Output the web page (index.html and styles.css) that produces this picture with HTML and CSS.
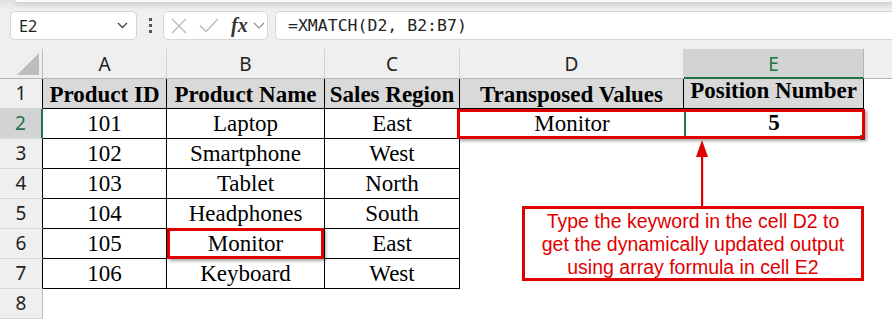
FILE: index.html
```html
<!DOCTYPE html>
<html lang="en">
<head>
    <meta charset="UTF-8">
    <title>XMATCH with Transposed Values</title>
    <link rel="stylesheet" href="styles.css">
</head>
<body>
    <div class="toolbar">
        <div class="ribbon-edge"></div>
        <div class="bar">
            <div class="name-box">
                <span>E2</span>
                <svg width="11" height="7" viewBox="0 0 11 7"><path d="M1 1 L5.5 5.5 L10 1" fill="none" stroke="#444" stroke-width="1.3"/></svg>
            </div>
            <div class="grip"><i></i><i></i><i></i></div>
            <div class="fx-box">
                <svg width="16" height="16" viewBox="0 0 16 16"><path d="M1 1 L15 15 M15 1 L1 15" stroke="#b8b8b8" stroke-width="1.3"/></svg>
                <svg width="20" height="15" viewBox="0 0 20 15"><path d="M1 7.5 L7 13.5 L19 1" fill="none" stroke="#b8b8b8" stroke-width="1.3"/></svg>
                <span class="fx">fx</span>
                <svg width="12" height="7" viewBox="0 0 12 7"><path d="M1 1 L6 6 L11 1" fill="none" stroke="#888" stroke-width="1.1"/></svg>
            </div>
            <div class="formula">=XMATCH(D2, B2:B7)</div>
        </div>
    </div>

    <div class="sheet">
        <!-- column headers -->
        <div class="colhead corner">
            <svg width="42" height="29" viewBox="0 0 42 29"><polygon points="17,26 39,26 39,4" fill="#bdbdbd"/></svg>
        </div>
        <div class="colhead">A</div>
        <div class="colhead">B</div>
        <div class="colhead">C</div>
        <div class="colhead">D</div>
        <div class="colhead sel">E</div>
        <div class="colhead rest"></div>

        <!-- row 1 -->
        <div class="rowhead tb">1</div>
        <div class="cell th first">Product ID</div>
        <div class="cell th">Product Name</div>
        <div class="cell th">Sales Region</div>
        <div class="cell th">Transposed Values</div>
        <div class="cell th top">Position Number</div>
        <div class="blank"></div>

        <!-- row 2 -->
        <div class="rowhead sel">2</div>
        <div class="cell first">101</div>
        <div class="cell">Laptop</div>
        <div class="cell">East</div>
        <div class="cell open">Monitor</div>
        <div class="cell open active">5</div>
        <div class="blank"></div>

        <div class="rowhead tb">3</div>
        <div class="cell first">102</div>
        <div class="cell">Smartphone</div>
        <div class="cell">West</div>
        <div class="blank"></div>
        <div class="blank"></div>
        <div class="blank"></div>

        <div class="rowhead tb">4</div>
        <div class="cell first">103</div>
        <div class="cell">Tablet</div>
        <div class="cell">North</div>
        <div class="blank"></div>
        <div class="blank"></div>
        <div class="blank"></div>

        <div class="rowhead tb">5</div>
        <div class="cell first">104</div>
        <div class="cell">Headphones</div>
        <div class="cell">South</div>
        <div class="blank"></div>
        <div class="blank"></div>
        <div class="blank"></div>

        <div class="rowhead tb">6</div>
        <div class="cell first">105</div>
        <div class="cell">Monitor</div>
        <div class="cell">East</div>
        <div class="blank"></div>
        <div class="blank"></div>
        <div class="blank"></div>

        <div class="rowhead tb">7</div>
        <div class="cell first">106</div>
        <div class="cell">Keyboard</div>
        <div class="cell">West</div>
        <div class="blank"></div>
        <div class="blank"></div>
        <div class="blank"></div>

        <div class="rowhead">8</div>
        <div class="blank"></div>
        <div class="blank"></div>
        <div class="blank"></div>
        <div class="blank"></div>
        <div class="blank"></div>
        <div class="blank"></div>

        <!-- annotations drawn over the sheet -->
        <div class="mark mark-result"></div>
        <div class="mark mark-source"></div>
        <svg class="arrow" width="16" height="70" viewBox="0 0 16 70">
            <polygon points="8,0 2,17 14,17" fill="#e00000"/>
            <rect x="7" y="15" width="2.2" height="53" fill="#e00000"/>
        </svg>
        <div class="callout">
            Type the keyword in the cell D2 to<br>
            get the dynamically updated output<br>
            using array formula in cell E2
        </div>
    </div>
</body>
</html>
```

FILE: styles.css
```css
body {
    margin: 0;
    width: 892px;
    height: 320px;
    overflow: hidden;
    background: #fff;
    font-family: "Noto Sans", "Open Sans", sans-serif;
}

/* formula bar */
.toolbar {
    height: 49px;
    background: linear-gradient(#e1e1e1 0, #efefef 10px, #efefef);
}
.ribbon-edge {
    margin-left: 15px;
    height: 2px;
    background: #fafafa;
    border-bottom: 1px solid #d2d2d2;
    border-bottom-left-radius: 5px;
    box-shadow: 0 2px 5px rgba(0, 0, 0, 0.12);
}
.bar {
    display: flex;
    align-items: center;
    margin-top: 8px;
    padding-left: 10px;
    height: 29px;
}
.name-box {
    box-sizing: border-box;
    width: 127px;
    height: 29px;
    display: flex;
    align-items: center;
    justify-content: space-between;
    padding: 0 8px 0 8px;
    background: #fff;
    border: 1px solid #d6d6d6;
    border-radius: 5px;
    font-size: 16px;
    color: #222;
}
.grip {
    width: 26px;
    display: flex;
    flex-direction: column;
    align-items: center;
    gap: 3px;
}
.grip i {
    width: 3px;
    height: 3px;
    background: #555;
}
.fx-box {
    box-sizing: border-box;
    width: 105px;
    height: 29px;
    display: flex;
    align-items: center;
    padding-left: 7px;
    background: #fff;
    border: 1px solid #d6d6d6;
    border-radius: 5px;
}
.fx-box svg:nth-child(2) {
    margin-left: 12px;
}
.fx {
    margin-left: 12px;
    margin-right: 5px;
    font-family: "Liberation Serif", serif;
    font-style: italic;
    font-weight: bold;
    font-size: 20px;
    color: #333;
}
.formula {
    box-sizing: border-box;
    flex: 1;
    height: 29px;
    margin-left: 7px;
    padding-left: 12px;
    line-height: 27px;
    background: #fff;
    border: 1px solid #d6d6d6;
    border-right: none;
    border-radius: 5px 0 0 5px;
    font-family: "DejaVu Sans Mono", monospace;
    font-size: 16.5px;
    color: #222;
}

/* grid */
.sheet {
    position: relative;
    display: grid;
    grid-template-columns: 43px 124px 158px 135px 224px 180px 1fr;
    grid-template-rows: repeat(9, 30px);
}
.colhead {
    box-sizing: border-box;
    background: #efefef;
    border-right: 1px solid #d4d4d4;
    border-bottom: 1px solid #b4b4b4;
    text-align: center;
    line-height: 30px;
    font-size: 19px;
    color: #222;
}
.colhead.corner {
    border-right-color: #bdbdbd;
}
.colhead.corner svg {
    display: block;
}
.colhead.sel {
    background: #d3d3d3;
    color: #217346;
    border-bottom: 2px solid #217346;
    border-right-color: #b4b4b4;
}
.colhead.rest {
    border-right: none;
}
.rowhead {
    box-sizing: border-box;
    background: #efefef;
    border-right: 1px solid #bdbdbd;
    border-bottom: 1px solid #d8d8d8;
    text-align: center;
    line-height: 29px;
    font-size: 19px;
    color: #222;
}
.rowhead.tb {
    border-right-color: #000;
}
.rowhead.sel {
    background: #d3d3d3;
    color: #217346;
    border-right: 2px solid #217346;
}
.cell {
    box-sizing: border-box;
    border-right: 1px solid #000;
    border-bottom: 1px solid #000;
    text-align: center;
    line-height: 29px;
    white-space: nowrap;
    font-family: "Liberation Serif", "Times New Roman", serif;
    font-size: 23px;
    color: #000;
}
.cell.th {
    background: #d9d9d9;
    font-weight: bold;
    line-height: 32px;
}
.cell.th.top {
    line-height: 24px;
}
.cell.open {
    border: none;
}
.cell.active {
    position: relative;
    border: 2px solid #217346;
    border-top: none;
    line-height: 28px;
    font-weight: bold;
}
.cell.active::after {
    content: "";
    position: absolute;
    right: -4px;
    bottom: -4px;
    width: 5px;
    height: 5px;
    background: #217346;
    border: 1px solid #fff;
}

/* annotations */
.mark {
    position: absolute;
    box-sizing: border-box;
    border: 3px solid #e00000;
    box-shadow: 2px 2px 3px rgba(0, 0, 0, 0.35);
}
.mark-result {
    left: 457px;
    top: 60px;
    width: 408px;
    height: 30px;
}
.mark-source {
    left: 167px;
    top: 179px;
    width: 157px;
    height: 31px;
}
.arrow {
    position: absolute;
    left: 694px;
    top: 91px;
}
.callout {
    position: absolute;
    box-sizing: border-box;
    left: 522px;
    top: 157px;
    width: 342px;
    height: 75px;
    padding-top: 1px;
    border: 3px solid #e00000;
    background: #fff;
    text-align: center;
    white-space: nowrap;
    font-family: "Liberation Sans", Arial, sans-serif;
    font-size: 19.5px;
    line-height: 23px;
    color: #e00000;
}
```
